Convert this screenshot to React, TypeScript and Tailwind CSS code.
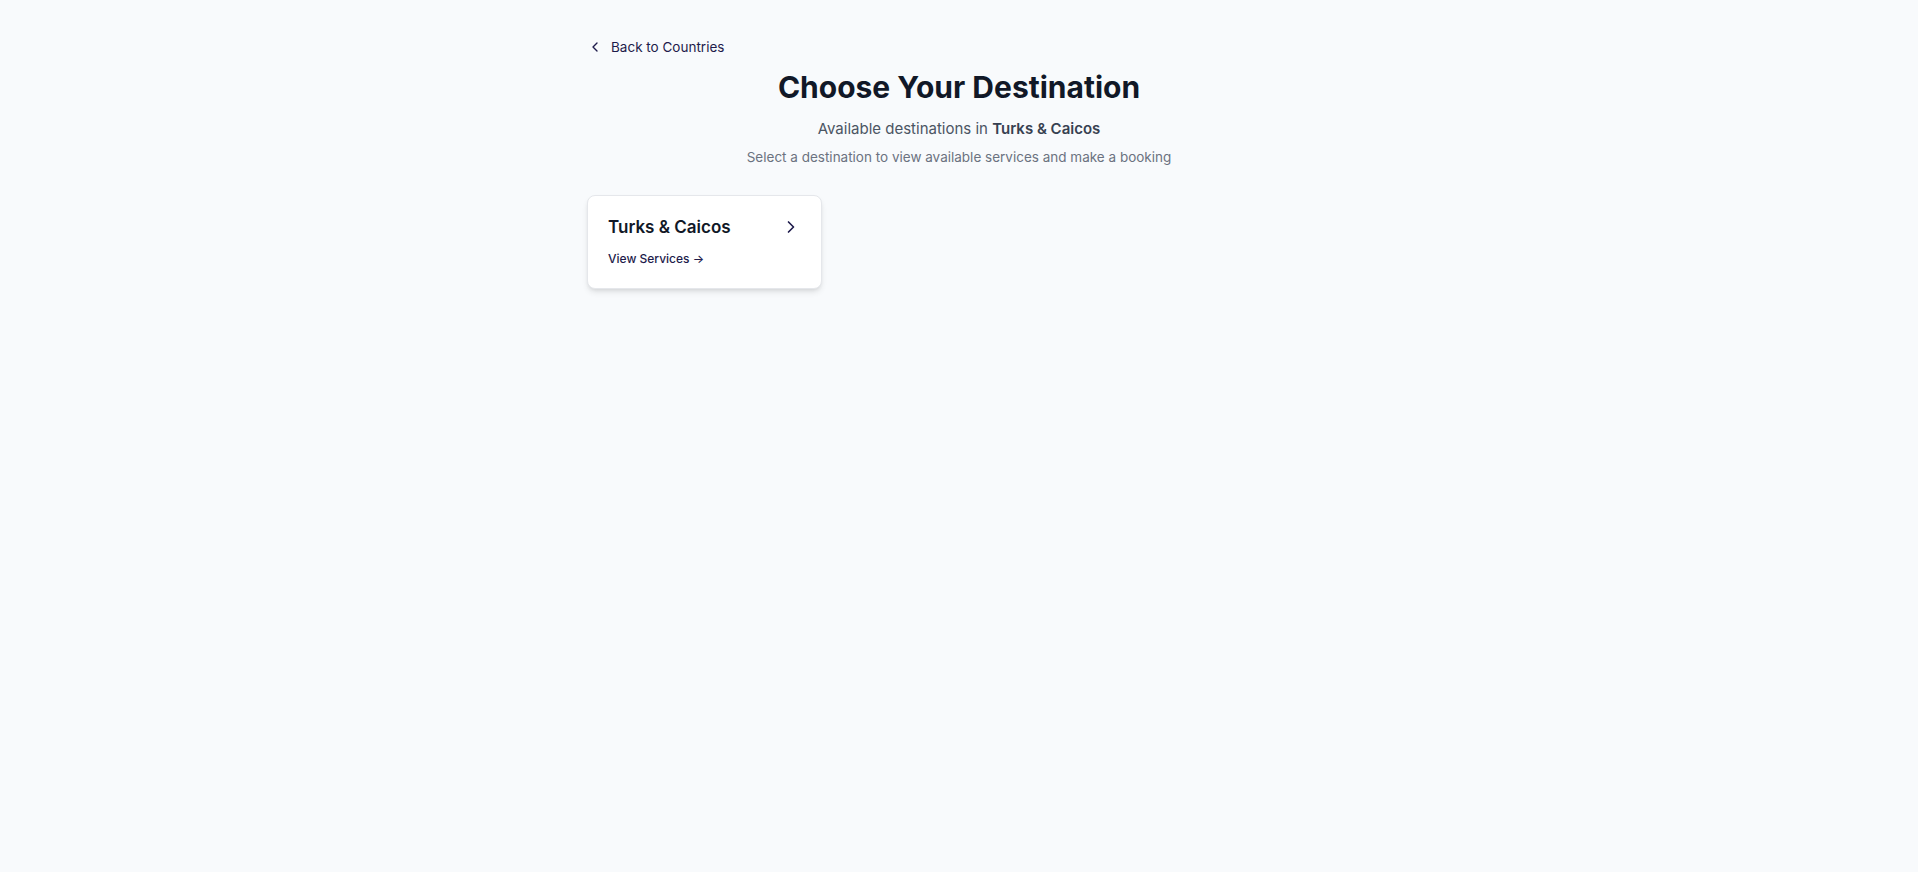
import { ChevronLeft, ChevronRight } from "lucide-react";

const destinations = [{ id: "tci", name: "Turks & Caicos" }];

export default function App() {
  return (
    <div className="min-h-screen bg-[#f8fafc] font-['Inter',sans-serif]">
      <div className="mx-auto max-w-[768px] px-3 pt-[37px]">
        <a href="#" className="flex w-fit items-center gap-2 text-[13.5px] leading-5 text-[#1e1b4b]">
          <ChevronLeft size={16} />
          Back to Countries
        </a>

        <div className="mt-3 text-center">
          <h1 className="text-3xl font-bold text-[#111827]">Choose Your Destination</h1>
          <p className="mt-3 text-[15px] leading-6 text-[#4b5563]">
            Available destinations in <span className="font-semibold text-[#374151]">Turks &amp; Caicos</span>
          </p>
          <p className="mt-1.5 text-[13.5px] leading-5 text-[#6b7280]">
            Select a destination to view available services and make a booking
          </p>
        </div>

        <div className="mt-7 grid grid-cols-3 gap-5">
          {destinations.map((d) => (
            <div
              key={d.id}
              className="cursor-pointer rounded-lg border border-[#e5e7eb] bg-white p-5 pb-[21px] shadow-md"
            >
              <div className="flex items-center justify-between">
                <h3 className="text-[17px] leading-[22px] font-semibold text-[#111827]">{d.name}</h3>
                <ChevronRight size={20} className="text-[#1e1b4b]" />
              </div>
              <div className="mt-[13px] text-xs leading-4 font-medium text-[#1e1b4b]">View Services →</div>
            </div>
          ))}
        </div>
      </div>
    </div>
  );
}
